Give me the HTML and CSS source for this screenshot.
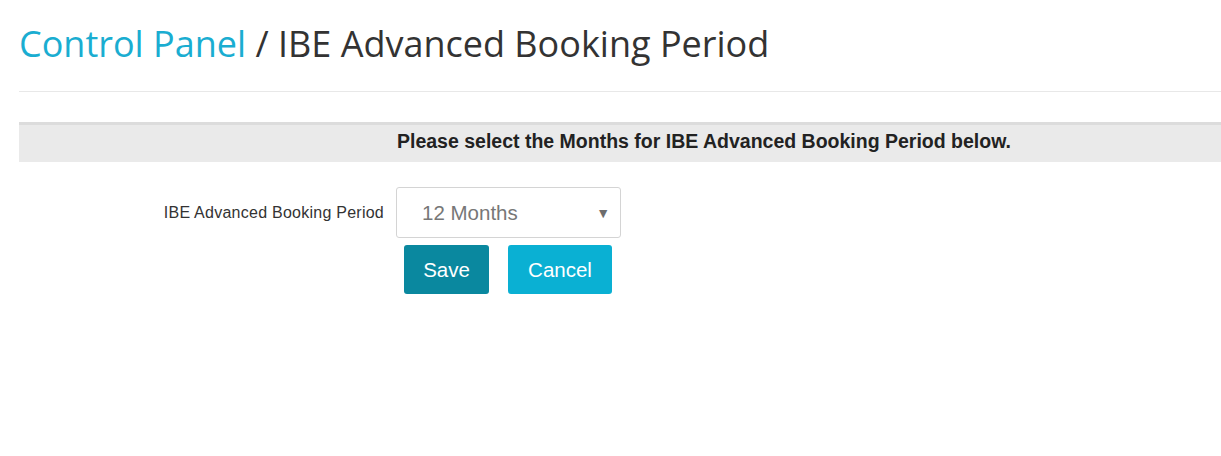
FILE: index.html
```html
<!DOCTYPE html>
<html>
<head>
<meta charset="utf-8">
<link rel="stylesheet" href="styles.css">
</head>
<body>
<div class="page">
  <h1 class="title"><a class="crumb" href="#">Control Panel</a> / IBE Advanced Booking Period</h1>
  <hr class="rule">
  <div class="banner">Please select the Months for IBE Advanced Booking Period below.</div>
  <form class="form">
    <div class="row">
      <label class="label">IBE Advanced Booking Period</label>
      <div class="select">
        <span class="select-value">12 Months</span>
        <span class="caret">&#9660;</span>
      </div>
    </div>
    <div class="actions">
      <button type="button" class="btn btn-save">Save</button>
      <button type="button" class="btn btn-cancel">Cancel</button>
    </div>
  </form>
</div>
</body>
</html>
```
FILE: styles.css
```css
html, body {
  margin: 0;
  padding: 0;
  background: #fff;
}
.page {
  padding-left: 19px;
  font-family: "Liberation Sans", Arial, sans-serif;
  color: #333;
}
.title {
  margin: 0;
  padding-top: 19px;
  font-family: "Open Sans", sans-serif;
  font-weight: 400;
  font-size: 36px;
  line-height: 49px;
  color: #333;
}
.crumb {
  color: #1aadd1;
  text-decoration: none;
}
.rule {
  margin: 23px 0 0 0;
  border: 0;
  border-top: 1px solid #e8e8e8;
  height: 0;
}
.banner {
  margin-top: 30px;
  border-top: 3px solid #dcdcdc;
  background: #eaeaea;
  height: 37px;
  padding-left: 378px;
  font-weight: 700;
  font-size: 19.5px;
  line-height: 33px;
  color: #222;
}
.form {
  margin-top: 25px;
}
.row {
  display: flex;
  align-items: center;
}
.label {
  width: 365px;
  text-align: right;
  font-size: 16px;
  letter-spacing: 0.25px;
  color: #333;
  margin-right: 12px;
}
.select {
  box-sizing: border-box;
  width: 225px;
  height: 51px;
  border: 1px solid #d4d4d4;
  border-radius: 3px;
  display: flex;
  align-items: center;
  justify-content: space-between;
  padding: 0 10px 0 25px;
}
.select-value {
  font-size: 20.5px;
  color: #777;
}
.caret {
  font-size: 14px;
  color: #6d6d6d;
}
.actions {
  display: flex;
  gap: 19px;
  margin-top: 7px;
  padding-left: 385px;
}
.btn {
  height: 49px;
  border: 0;
  border-radius: 3px;
  color: #fff;
  font-family: "Liberation Sans", Arial, sans-serif;
  font-size: 20.5px;
  padding: 0;
}
.btn-save {
  width: 85px;
  background: #0a889f;
}
.btn-cancel {
  width: 104px;
  background: #0ab0d3;
}
```
